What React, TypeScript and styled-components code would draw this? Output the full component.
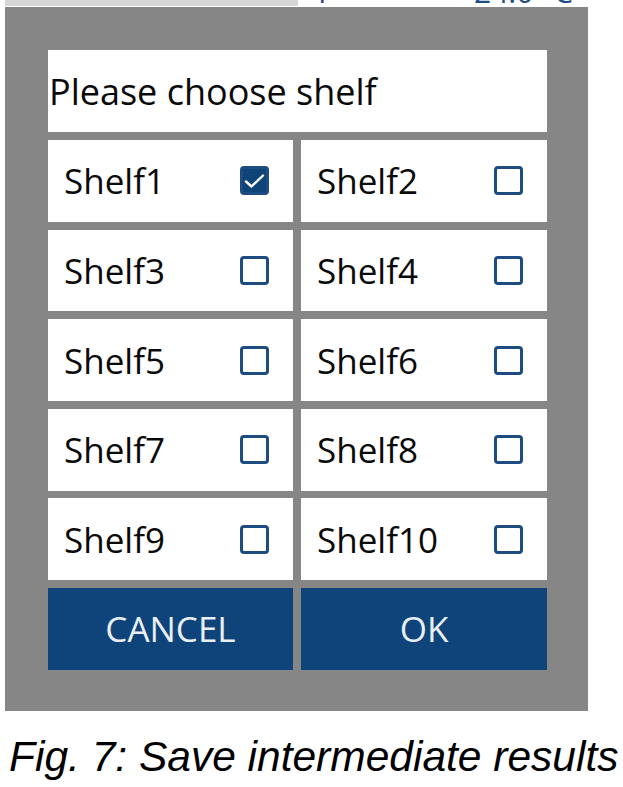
import React from "react";
import styled, { createGlobalStyle } from "styled-components";

const Global = createGlobalStyle`
  html, body { margin: 0; padding: 0; background: #ffffff; }
  body { font-family: "Open Sans", "Noto Sans", sans-serif; }
`;

const Page = styled.div`
  width: 623px;
  height: 787px;
  overflow: hidden;
  display: flex;
  flex-direction: column;
`;

const TopStrip = styled.div`
  height: 7px;
  display: flex;
  overflow: hidden;
`;

const StripBar = styled.div`
  margin-left: 5px;
  width: 293px;
  height: 6px;
  background: #d6d6d6;
`;

const StripText = styled.div`
  margin-left: 16px;
  width: 270px;
  position: relative;
  overflow: hidden;
  color: #1d4f86;
  font-size: 30px;
  line-height: 30px;
  white-space: nowrap;
`;

const StripInner = styled.span<{ $left: number }>`
  position: absolute;
  top: -23px;
  left: ${(p) => p.$left}px;
`;

const Panel = styled.div`
  margin-left: 5px;
  width: 583px;
  height: 704px;
  box-sizing: border-box;
  background: #868686;
  padding: 43px 41px 40px 43px;
  display: flex;
  flex-direction: column;
  gap: 8px;
`;

const Header = styled.div`
  height: 82px;
  background: #ffffff;
  display: flex;
  align-items: center;
  padding-left: 1px;
  font-size: 36px;
  color: #0a0a0a;
`;

const Grid = styled.div`
  display: grid;
  grid-template-columns: 245px 246px;
  grid-auto-rows: 81.8px;
  column-gap: 8px;
  row-gap: 7.8px;
`;

const Cell = styled.div`
  background: #ffffff;
  display: flex;
  align-items: center;
  justify-content: space-between;
  padding: 0 24px 0 16px;
  font-size: 35px;
  color: #0a0a0a;
`;

const Box = styled.div<{ $checked: boolean }>`
  width: 29px;
  height: 29px;
  box-sizing: border-box;
  border-radius: 4px;
  border: 3px solid #1c4c80;
  background: ${(p) => (p.$checked ? "#0f4479" : "#ffffff")};
  display: flex;
  align-items: center;
  justify-content: center;
`;

const Button = styled.div`
  background: #0e4479;
  color: #e9eff6;
  display: flex;
  align-items: center;
  justify-content: center;
  font-size: 35px;
`;

const Caption = styled.div`
  margin-top: 22px;
  padding-left: 9px;
  font-family: "Liberation Sans", Arial, sans-serif;
  font-style: italic;
  font-size: 42.5px;
  line-height: 48px;
  color: #000;
  white-space: nowrap;
`;

const shelves = Array.from({ length: 10 }, (_, i) => ({
  name: `Shelf${i + 1}`,
  checked: i === 0,
}));

export default function App() {
  return (
    <>
      <Global />
      <Page>
        <TopStrip>
          <StripBar />
          <StripText>
            <StripInner $left={0}>T</StripInner>
            <StripInner $left={160}>24.0 °C</StripInner>
          </StripText>
        </TopStrip>
        <Panel>
          <Header>Please choose shelf</Header>
          <Grid>
            {shelves.map((s) => (
              <Cell key={s.name}>
                <span>{s.name}</span>
                <Box $checked={s.checked}>
                  {s.checked && (
                    <svg width="21" height="16" viewBox="0 0 21 16">
                      <path
                        d="M2 8.5 L7.5 13.5 L19 2.5"
                        fill="none"
                        stroke="#ffffff"
                        strokeWidth="2.4"
                        strokeLinecap="round"
                        strokeLinejoin="round"
                      />
                    </svg>
                  )}
                </Box>
              </Cell>
            ))}
            <Button>CANCEL</Button>
            <Button>OK</Button>
          </Grid>
        </Panel>
        <Caption>Fig. 7: Save intermediate results</Caption>
      </Page>
    </>
  );
}
